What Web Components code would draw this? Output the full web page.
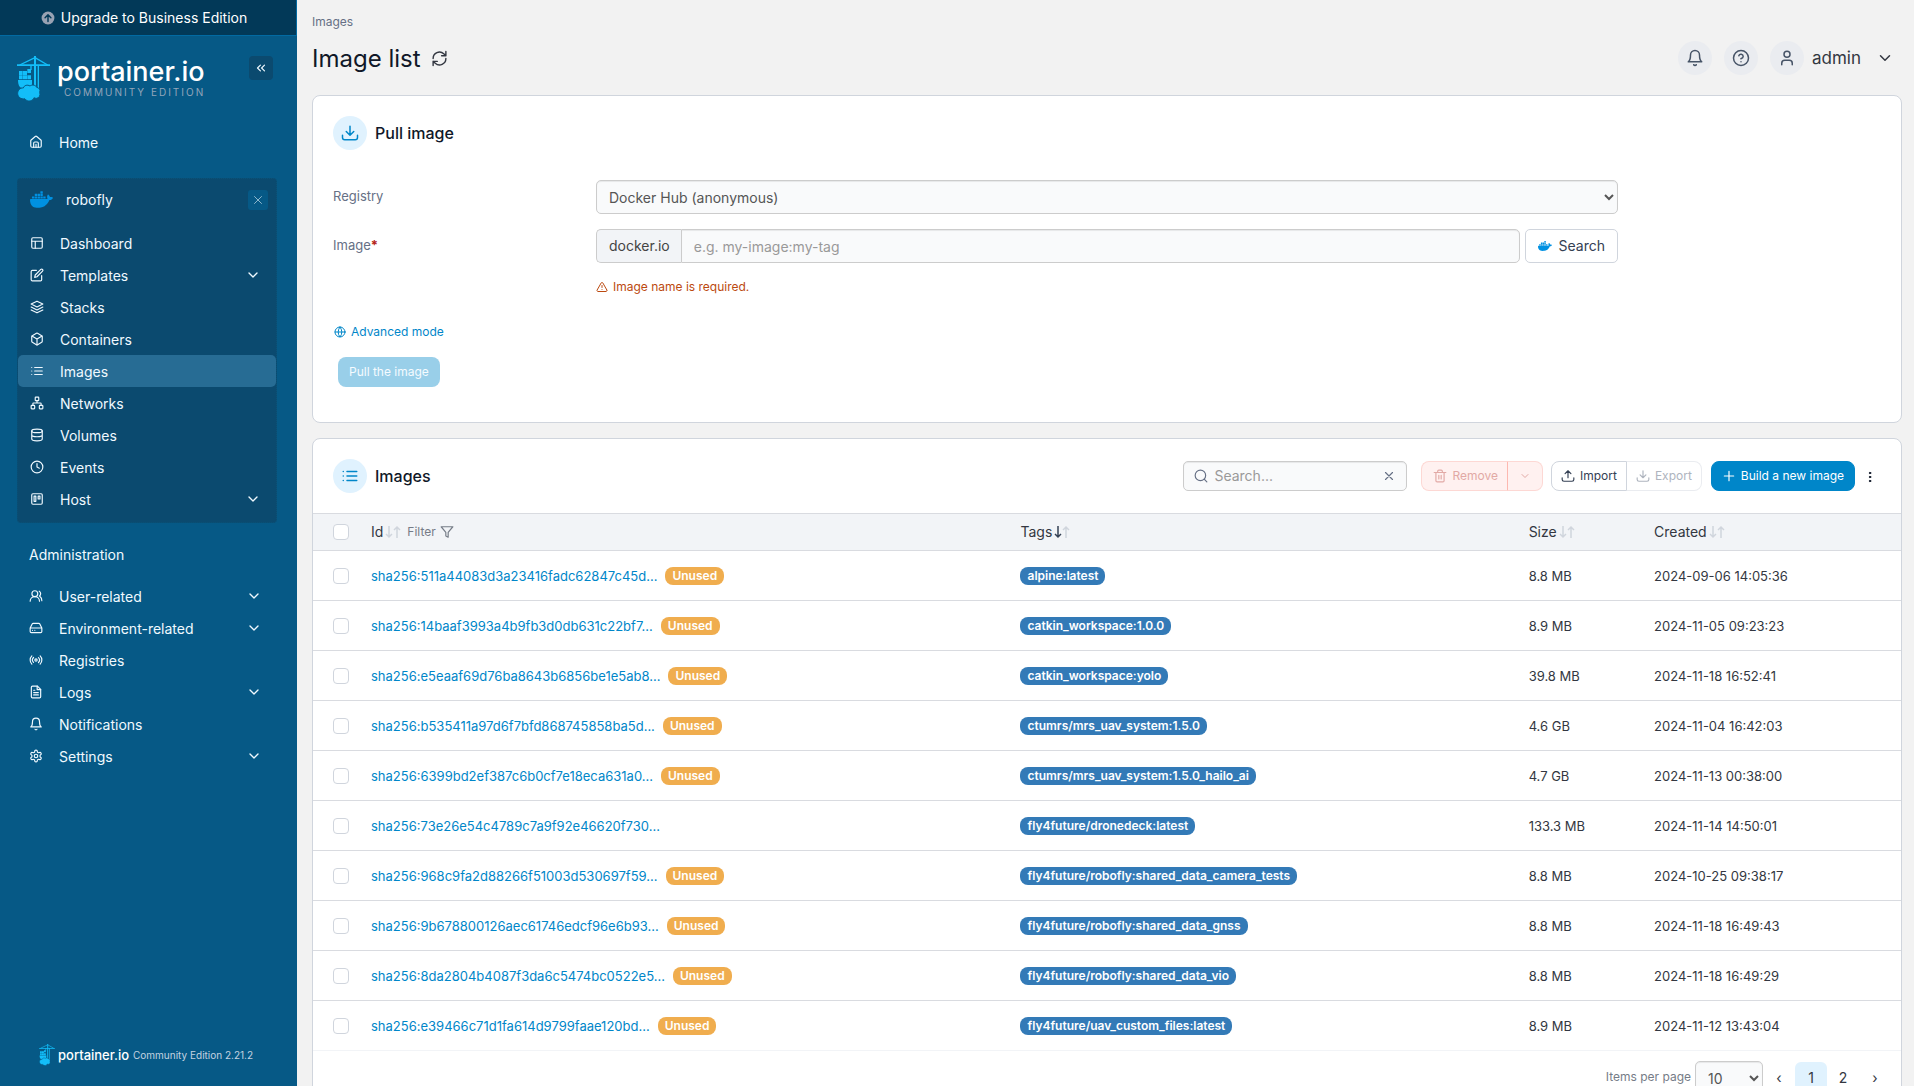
<!DOCTYPE html>
<html lang="en">
<head>
<meta charset="utf-8">
<title>Portainer</title>
<style>
  body { margin: 0; font-family: Inter, "Liberation Sans", sans-serif; font-size: 14px; line-height: 20px; color: #333741; background: #f2f2f2; }
</style>
</head>
<body>
<portainer-app>
  <app-sidebar slot="sidebar"></app-sidebar>
  <page-header page-title="Image list" crumb="Images" user="admin"></page-header>
  <pull-image-form></pull-image-form>
  <images-table></images-table>
</portainer-app>

<script>
const RESET = `:host, *, *::before, *::after { box-sizing: border-box; }
  button, input, select { font: inherit; color: inherit; margin: 0; }
  a { color: inherit; text-decoration: none; }
  h1, h2, p { margin: 0; font-weight: 500; }`;

function define(name, render) {
  customElements.define(name, class extends HTMLElement {
    connectedCallback() {
      if (this.shadowRoot) return;
      this.attachShadow({ mode: 'open' }).innerHTML = render(this);
    }
  });
}

const ICONS = {
  home: '<path d="M3 10a2 2 0 0 1 .7-1.5l7-6a2 2 0 0 1 2.6 0l7 6A2 2 0 0 1 21 10v9a2 2 0 0 1-2 2H5a2 2 0 0 1-2-2z"/><path d="M8 21v-7a2 2 0 0 1 2-2h4a2 2 0 0 1 2 2v7M12 16v5"/>',
  layout: '<rect x="3" y="3" width="18" height="18" rx="2"/><path d="M3 9h18M9 21V9"/>',
  edit: '<path d="M11 4H4a2 2 0 0 0-2 2v14a2 2 0 0 0 2 2h14a2 2 0 0 0 2-2v-7"/><path d="M18.5 2.5a2.12 2.12 0 0 1 3 3L12 15l-4 1 1-4z"/>',
  layers: '<path d="M12 2 2 7l10 5 10-5z"/><path d="m2 17 10 5 10-5M2 12l10 5 10-5"/>',
  box: '<path d="M21 8a2 2 0 0 0-1-1.73l-7-4a2 2 0 0 0-2 0l-7 4A2 2 0 0 0 3 8v8a2 2 0 0 0 1 1.73l7 4a2 2 0 0 0 2 0l7-4A2 2 0 0 0 21 16z"/><path d="m3.3 7 8.7 5 8.7-5M12 22V12"/>',
  list: '<path d="M8 6h13M8 12h13M8 18h13M3 6h.01M3 12h.01M3 18h.01"/>',
  network: '<rect x="16" y="16" width="6" height="6" rx="1"/><rect x="2" y="16" width="6" height="6" rx="1"/><rect x="9" y="2" width="6" height="6" rx="1"/><path d="M5 16v-3a1 1 0 0 1 1-1h12a1 1 0 0 1 1 1v3M12 12V8"/>',
  database: '<ellipse cx="12" cy="5" rx="9" ry="3"/><path d="M3 5v14c0 1.66 4 3 9 3s9-1.34 9-3V5M3 12c0 1.66 4 3 9 3s9-1.34 9-3"/>',
  clock: '<circle cx="12" cy="12" r="10"/><path d="M12 6v6l4 2"/>',
  trello: '<rect x="3" y="3" width="18" height="18" rx="2"/><path d="M7 7h3v9H7zM14 7h3v5h-3z"/>',
  users: '<path d="M18 21a8 8 0 0 0-16 0"/><circle cx="10" cy="8" r="5"/><path d="M22 20c0-3.37-2-6.5-4-8a5 5 0 0 0-.45-8.3"/>',
  drive: '<path d="M22 12H2M5.45 5.11 2 12v6a2 2 0 0 0 2 2h16a2 2 0 0 0 2-2v-6l-3.45-6.89A2 2 0 0 0 16.76 4H7.24a2 2 0 0 0-1.79 1.11zM6 16h.01M10 16h.01"/>',
  radio: '<circle cx="12" cy="12" r="2"/><path d="M4.9 19.1C1 15.2 1 8.8 4.9 4.9M7.8 16.2c-2.3-2.3-2.3-6.1 0-8.5M16.2 7.8c2.3 2.3 2.3 6.1 0 8.5M19.1 4.9C23 8.8 23 15.1 19.1 19"/>',
  file: '<path d="M14.5 2H6a2 2 0 0 0-2 2v16a2 2 0 0 0 2 2h12a2 2 0 0 0 2-2V7.500z"/><path d="M14 2v6h6M16 13H8M16 17H8M10 9H8"/>',
  bell: '<path d="M18 8A6 6 0 0 0 6 8c0 7-3 9-3 9h18s-3-2-3-9M10.300 21a2 2 0 0 0 3.400 0"/>',
  settings: '<path d="M12.22 2h-.44a2 2 0 0 0-2 2v.18a2 2 0 0 1-1 1.73l-.43.25a2 2 0 0 1-2 0l-.15-.08a2 2 0 0 0-2.730.73l-.22.38a2 2 0 0 0 .73 2.730l.15.1a2 2 0 0 1 1 1.720v.51a2 2 0 0 1-1 1.740l-.15.09a2 2 0 0 0-.73 2.730l.22.38a2 2 0 0 0 2.730.73l.15-.08a2 2 0 0 1 2 0l.43.25a2 2 0 0 1 1 1.730V20a2 2 0 0 0 2 2h.44a2 2 0 0 0 2-2v-.18a2 2 0 0 1 1-1.730l.43-.25a2 2 0 0 1 2 0l.15.08a2 2 0 0 0 2.730-.73l.22-.39a2 2 0 0 0-.73-2.730l-.15-.08a2 2 0 0 1-1-1.740v-.5a2 2 0 0 1 1-1.740l.15-.09a2 2 0 0 0 .73-2.730l-.22-.38a2 2 0 0 0-2.730-.73l-.15.08a2 2 0 0 1-2 0l-.43-.25a2 2 0 0 1-1-1.730V4a2 2 0 0 0-2-2z"/><circle cx="12" cy="12" r="3"/>',
  down: '<path d="m6 9 6 6 6-6"/>',
  collapse: '<path d="m11 17-5-5 5-5M18 17l-5-5 5-5"/>',
  x: '<path d="M18 6 6 18M6 6l12 12"/>',
  refresh: '<path d="M3 2v6h6M21 12A9 9 0 0 0 6 5.300L3 8M21 22v-6h-6M3 12a9 9 0 0 0 15 6.700l3-2.700" transform="matrix(-1 0 0 1 24 0)"/>',
  help: '<circle cx="12" cy="12" r="10"/><path d="M9.090 9a3 3 0 0 1 5.830 1c0 2-3 3-3 3M12 17h.01"/>',
  user: '<path d="M19 21v-2a4 4 0 0 0-4-4H9a4 4 0 0 0-4 4v2"/><circle cx="12" cy="7" r="4"/>',
  download: '<path d="M2 15v3a3 3 0 0 0 3 3h14a3 3 0 0 0 3-3v-3M7 10l5 5 5-5M12 15V3"/>',
  upload: '<path d="M2 15v3a3 3 0 0 0 3 3h14a3 3 0 0 0 3-3v-3M7 8l5-5 5 5M12 3v12"/>',
  warning: '<path d="m21.730 18-8-14a2 2 0 0 0-3.480 0l-8 14A2 2 0 0 0 4 21h16a2 2 0 0 0 1.730-3M12 9v4M12 17h.01"/>',
  globe: '<circle cx="12" cy="12" r="10"/><path d="M2 12h20M12 2a15.300 15.300 0 0 1 0 20 15.300 15.300 0 0 1 0-20"/>',
  search: '<circle cx="11" cy="11" r="9"/><path d="m22 22-4.500-4.500"/>',
  trash: '<path d="M2 6h20M19 6v14a2 2 0 0 1-2 2H7a2 2 0 0 1-2-2V6M8 6V4a2 2 0 0 1 2-2h4a2 2 0 0 1 2 2v2M10 11v6M14 11v6"/>',
  plus: '<path d="M12 4v16M4 12h16"/>',
  dots: '<circle cx="12" cy="4" r="1.500" fill="currentColor"/><circle cx="12" cy="12" r="1.500" fill="currentColor"/><circle cx="12" cy="20" r="1.500" fill="currentColor"/>',
  filter: '<path d="M22 3H2l8 9.460V19l4 2v-8.540z"/>',
  up: '<circle cx="12" cy="12" r="11" fill="currentColor" stroke="none"/><path d="M12 18V7M7 11.500 12 6.500l5 5" stroke="#023958" stroke-width="2.500"/>',
  docker: '<path fill="currentColor" stroke="none" d="M13.983 11.078h2.119a.186.186 0 00.186-.185V9.006a.186.186 0 00-.186-.186h-2.119a.185.185 0 00-.185.185v1.888c0 .102.083.185.185.185m-2.954-5.430h2.118a.186.186 0 00.186-.186V3.574a.186.186 0 00-.186-.185h-2.118a.185.185 0 00-.185.185v1.888c0 .102.082.185.185.185m0 2.716h2.118a.187.187 0 00.186-.186V6.290a.186.186 0 00-.186-.185h-2.118a.185.185 0 00-.185.185v1.887c0 .102.082.185.185.186m-2.930 0h2.120a.186.186 0 00.184-.186V6.290a.185.185 0 00-.185-.185H8.100a.185.185 0 00-.185.185v1.887c0 .102.083.185.185.186m-2.964 0h2.119a.186.186 0 00.185-.186V6.290a.185.185 0 00-.185-.185H5.136a.186.186 0 00-.186.185v1.887c0 .102.084.185.186.186m5.893 2.715h2.118a.186.186 0 00.186-.185V9.006a.186.186 0 00-.186-.186h-2.118a.185.185 0 00-.185.185v1.888c0 .102.082.185.185.185m-2.930 0h2.120a.185.185 0 00.184-.185V9.006a.185.185 0 00-.184-.186h-2.120a.185.185 0 00-.184.185v1.888c0 .102.083.185.185.185m-2.964 0h2.119a.185.185 0 00.185-.185V9.006a.185.185 0 00-.184-.186h-2.120a.186.186 0 00-.186.186v1.887c0 .102.084.185.186.185m-2.920 0h2.120a.185.185 0 00.184-.185V9.006a.185.185 0 00-.184-.186h-2.120a.185.185 0 00-.184.185v1.888c0 .102.082.185.185.185M23.763 9.890c-.065-.051-.672-.510-1.954-.510-.338.001-.676.030-1.010.087-.248-1.700-1.653-2.530-1.716-2.566l-.344-.199-.226.327c-.284.438-.490.922-.612 1.430-.230.970-.090 1.882.403 2.661-.595.332-1.550.413-1.744.420H.751a.751.751 0 00-.750.748 11.376 11.376 0 00.692 4.062c.545 1.428 1.355 2.480 2.410 3.124 1.180.723 3.100 1.137 5.275 1.137.983.003 1.963-.086 2.930-.266a12.248 12.248 0 003.823-1.389c.980-.567 1.860-1.288 2.610-2.136 1.252-1.418 1.998-2.997 2.553-4.400h.221c1.372 0 2.215-.549 2.680-1.009.309-.293.550-.650.707-1.046l.098-.288z"/>',
};

define('ui-icon', el => {
  const size = el.getAttribute('size') || 14;
  return `<style>:host { display: inline-flex; flex: none; } svg { display: block; overflow: visible; }</style>
  <svg width="${size}" height="${size}" viewBox="0 0 24 24" fill="none" stroke="currentColor" stroke-width="${el.getAttribute('stroke') || 2}" stroke-linecap="round" stroke-linejoin="round" aria-hidden="true">${ICONS[el.getAttribute('name')]}</svg>`;
});

/* Two thin arrows next to a sortable column's name */
define('sort-arrows', () => `<style>:host { display: inline-flex; color: #d0d5dd; } :host([active]) .d { color: #344054; }
  svg { display: block; margin: 0 -1px; }</style>
  <svg class="d" width="10" height="14" viewBox="0 0 10 14" fill="none" stroke="currentColor" stroke-width="1.500"><path d="M5 1v11M2 9l3 3 3-3"/></svg>
  <svg width="10" height="14" viewBox="0 0 10 14" fill="none" stroke="currentColor" stroke-width="1.500"><path d="M5 13V2M2 5l3-3 3 3"/></svg>`);

define('icon-badge', el => `<style>:host { display: flex; flex: none; width: 34px; height: 34px; border-radius: 50%; align-items: center; justify-content: center; background: #e0f2fe; color: #0086c9; }</style>
  <ui-icon name="${el.getAttribute('name')}" size="18"></ui-icon>`);

define('crane-mark', el => `<style>:host { display: block; flex: none; } svg { display: block; }</style>
  <svg width="${el.getAttribute('width')}" height="${el.getAttribute('height')}" viewBox="0 0 99 138" fill="#13bef9" aria-hidden="true">
    <path d="M51 0h6v100h-6zM0 25h99v5H0zM62 30h4v70h-4zM40 30h4v12h-4z"/>
    <path d="M54 5 8 27M54 5l38 22" fill="none" stroke="#13bef9" stroke-width="4"/>
    <path d="M31 39h11v12H31zM6 45h11v12H6zM18 45h12v12H18zM6 58h11v12H6zM18 58h12v12H18zM31 58h11v12H31z"/>
    <path d="M3 72h42v24H16C8 96 3 88 3 72z"/>
    <path stroke="#065986" stroke-width="3" d="M2 112c0-10 8-17 17-16 2-8 12-11 20-6 6-5 17-3 20 4 8 1 12 8 9 15 3 8-1 17-9 18-5 0-6-1-8-2-3 8-12 12-20 9-4-1-6-3-8-6-11 3-21-5-21-16z"/>
  </svg>`);

define('nav-item', el => `<style>${RESET}
  :host { display: block; }
  a { display: flex; align-items: center; height: 32px; padding: 0 15px 0 12px; border-radius: 5px; color: #f0f9ff; }
  :host([active]) a { background: #276c94; }
  .label { flex: 1; padding: 1px 0 0 16px; }
</style>
<a href="#"><ui-icon name="${el.getAttribute('icon')}"></ui-icon><span class="label"><slot></slot></span>${el.hasAttribute('expandable') ? '<ui-icon name="down" size="16"></ui-icon>' : ''}</a>`);

define('app-sidebar', () => `<style>${RESET}
  :host { display: flex; flex-direction: column; flex: none; width: 297px; height: 100vh; background: #065986; color: #f0f9ff; }
  .upgrade { display: flex; align-items: center; justify-content: center; gap: 6px; height: 36px; padding: 0 8px 0 0; border: 0; border-right: 1px solid #026aa2; border-bottom: 1px solid #026aa2; background: #023958; color: #fff; cursor: pointer; }
  .upgrade ui-icon { color: #98a2b3; }
  .brand { display: flex; align-items: flex-start; padding: 20px 24px 0 17px; height: 90px; }
  .words { flex: 1; padding-left: 7px; }
  .name { display: block; font-size: 27px; line-height: 32px; font-weight: 500; color: #fff; }
  .edition { display: block; padding-left: 7px; font-size: 10px; line-height: 8px; letter-spacing: 2px; color: #93a5ba; }
  .square { display: flex; align-items: center; justify-content: center; width: 24px; height: 24px; padding: 0; border: 0; border-radius: 4px; background: #0b4a6f; color: #f0f9ff; cursor: pointer; }
  .env { margin: 20px 20px 0 17px; padding-bottom: 7px; border: 1px dotted #0a5278; border-radius: 4px; background: #0b4a6f; }
  .env-head { display: flex; align-items: center; height: 48px; padding: 0 8px 7px 12px; }
  .env-head .docker { color: #0091e2; }
  .env-head span { flex: 1; padding-left: 13px; }
  .env-head .square { width: 20px; height: 20px; border-radius: 3px; background: #065986; }
  .plain { margin: 0 20px 0 17px; }
  .section { padding: 22px 29px 15px; line-height: 20px; }
  footer { display: flex; align-items: center; margin-top: auto; padding: 0 0 20px 39px; font-size: 10px; color: #c3d3e0; }
  footer b { padding: 0 4px 0 3px; font-size: 13px; font-weight: 500; color: #fff; }
</style>
<button class="upgrade" type="button"><ui-icon name="up"></ui-icon>Upgrade to Business Edition</button>
<div class="brand"><crane-mark width="33" height="46"></crane-mark>
  <div class="words"><span class="name">portainer.io</span><span class="edition">COMMUNITY EDITION</span></div>
  <button class="square" type="button" aria-label="Collapse sidebar"><ui-icon name="collapse"></ui-icon></button></div>
<nav class="plain" aria-label="Main"><nav-item icon="home">Home</nav-item></nav>
<nav class="env" aria-label="Environment">
  <div class="env-head"><ui-icon class="docker" name="docker" size="23"></ui-icon><span>robofly</span><button class="square" type="button" aria-label="Close environment"><ui-icon name="x" size="14" stroke="1"></ui-icon></button></div>
  <nav-item icon="layout">Dashboard</nav-item>
  <nav-item icon="edit" expandable>Templates</nav-item>
  <nav-item icon="layers">Stacks</nav-item>
  <nav-item icon="box">Containers</nav-item>
  <nav-item icon="list" active>Images</nav-item>
  <nav-item icon="network">Networks</nav-item>
  <nav-item icon="database">Volumes</nav-item>
  <nav-item icon="clock">Events</nav-item>
  <nav-item icon="trello" expandable>Host</nav-item>
</nav>
<div class="section">Administration</div>
<nav class="plain" aria-label="Administration">
  <nav-item icon="users" expandable>User-related</nav-item>
  <nav-item icon="drive" expandable>Environment-related</nav-item>
  <nav-item icon="radio">Registries</nav-item>
  <nav-item icon="file" expandable>Logs</nav-item>
  <nav-item icon="bell">Notifications</nav-item>
  <nav-item icon="settings" expandable>Settings</nav-item>
</nav>
<footer><crane-mark width="16" height="22"></crane-mark><b>portainer.io</b><span>Community Edition 2.21.2</span></footer>`);

define('portainer-app', () => `<style>${RESET}
  :host { display: flex; height: 100vh; }
  main { flex: 1; min-width: 0; padding: 0 12px 20px 15px; display: flex; flex-direction: column; gap: 15px; overflow-y: auto; scrollbar-width: none; }
</style><slot name="sidebar"></slot><main><slot></slot></main>`);

define('page-header', el => `<style>${RESET}
  :host { display: block; height: 80px; flex: none; padding-top: 12px; }
  .crumb { display: block; font-size: 12px; line-height: 20px; color: #667085; }
  .row { display: flex; align-items: center; height: 34px; margin-top: 9px; }
  h1 { padding-top: 2px; font-size: 24px; line-height: 32px; font-weight: 400; color: #101828; }
  .plain { display: flex; align-items: center; padding: 0; border: 0; background: none; cursor: pointer; }
  .refresh { margin: 0 auto 0 10px; }
  .actions { display: flex; align-items: center; gap: 12px; padding-right: 8px; }
  .round { display: flex; align-items: center; justify-content: center; width: 34px; height: 34px; padding: 0; border: 0; border-radius: 50%; background: #eaecf0; color: #475467; }
  .user { font-size: 17px; gap: 8px; }
  .user span.name { padding-right: 7px; }
</style>
<a class="crumb" href="#">${el.getAttribute('crumb')}</a>
<div class="row"><h1>${el.getAttribute('page-title')}</h1>
<button class="plain refresh" type="button" aria-label="Refresh"><ui-icon name="refresh" size="17"></ui-icon></button>
<div class="actions"><button class="round" type="button" aria-label="Notifications"><ui-icon name="bell" size="18"></ui-icon></button>
<button class="round" type="button" aria-label="Help"><ui-icon name="help" size="18"></ui-icon></button>
<button class="plain user" type="button"><span class="round"><ui-icon name="user" size="18"></ui-icon></span><span class="name">${el.getAttribute('user')}</span><ui-icon name="down" size="18"></ui-icon></button></div></div>`);

const CARD = `:host { display: block; flex: none; border: 1px solid #d0d5dd; border-radius: 8px; background: #fff; }
  .head { display: flex; align-items: center; gap: 8px; padding: 20px; }
  h2 { font-size: 16px; line-height: 24px; color: #101828; }
  .field { border: 1px solid #ccc; border-radius: 5px; background: #f9fafb; box-shadow: inset 0 1px 1px rgba(0,0,0,.075); color: #555; outline: 0; }
  input::placeholder { color: #999; opacity: 1; }`;

define('pull-image-form', () => `<style>${RESET}${CARD}
  form { padding: 10px 20px 35px; }
  .line { display: grid; grid-template-columns: 263px minmax(0, 1022px); margin-bottom: 15px; }
  label { padding-top: 6px; font-size: 13px; color: #667085; }
  label i { font-style: normal; font-weight: 700; color: #b42318; }
  select.field { width: 100%; height: 34px; padding: 0 8px; }
  .group { display: flex; }
  .addon { display: flex; align-items: center; height: 34px; padding: 0 11px 0 12px; border: 1px solid #ccc; border-right: 0; border-radius: 5px 0 0 5px; background: #f2f4f7; color: #444; }
  .group .field { flex: 1; min-width: 0; height: 34px; padding: 0 12px; border-radius: 0 5px 5px 0; }
  .search { display: flex; align-items: center; gap: 7px; margin-left: 5px; padding: 0 12px; border: 1px solid #d0d5dd; border-radius: 5px; background: #fff; color: #344054; }
  .search ui-icon { color: #0091e2; }
  .warn { display: flex; align-items: center; gap: 5px; margin-top: 14px; font-size: 12px; font-weight: 400; color: #bc4a10; }
  .mode { display: flex; align-items: center; gap: 5px; margin-top: 25px; font-size: 12px; color: #0086c9; padding: 0 1px; border: 0; background: none; }
  .pull { height: 30px; margin: 15px 5px 0; padding: 0 11px; border: 0; border-radius: 8px; background: #99cfe9; color: #f5fbff; font-size: 12px; }
</style>
<div class="head"><icon-badge name="download"></icon-badge><h2>Pull image</h2></div>
<form>
  <div class="line"><label for="registry">Registry</label><select class="field" id="registry"><option>Docker Hub (anonymous)</option></select></div>
  <div class="line"><label for="image">Image<i>*</i></label>
    <div><div class="group"><span class="addon">docker.io</span><input class="field" id="image" type="text" placeholder="e.g. my-image:my-tag"><button class="search" type="button"><ui-icon name="docker"></ui-icon>Search</button></div>
    <p class="warn"><ui-icon name="warning" size="12"></ui-icon>Image name is required.</p></div></div>
  <button class="mode" type="button"><ui-icon name="globe" size="12"></ui-icon>Advanced mode</button>
  <button class="pull" type="button" disabled>Pull the image</button>
</form>`);

define('ui-pill', () => `<style>:host { display: block; height: 18px; padding: 0 7px; border-radius: 8px; background: #337ab7; color: #fff; font-size: 12px; line-height: 18px; font-weight: 600; }
  :host([kind="unused"]) { background: #f0ad4e; }</style><slot></slot>`);

const IMAGES = [
  ['511a44083d3a23416fadc62847c45d', 1, 'alpine:latest', '8.8 MB', '2024-09-06 14:05:36'],
  ['14baaf3993a4b9fb3d0db631c22bf7', 1, 'catkin_workspace:1.0.0', '8.9 MB', '2024-11-05 09:23:23'],
  ['e5eaaf69d76ba8643b6856be1e5ab8', 1, 'catkin_workspace:yolo', '39.8 MB', '2024-11-18 16:52:41'],
  ['b535411a97d6f7bfd868745858ba5d', 1, 'ctumrs/mrs_uav_system:1.5.0', '4.6 GB', '2024-11-04 16:42:03'],
  ['6399bd2ef387c6b0cf7e18eca631a0', 1, 'ctumrs/mrs_uav_system:1.5.0_hailo_ai', '4.7 GB', '2024-11-13 00:38:00'],
  ['73e26e54c4789c7a9f92e46620f730', 0, 'fly4future/dronedeck:latest', '133.3 MB', '2024-11-14 14:50:01'],
  ['968c9fa2d88266f51003d530697f59', 1, 'fly4future/robofly:shared_data_camera_tests', '8.8 MB', '2024-10-25 09:38:17'],
  ['9b678800126aec61746edcf96e6b93', 1, 'fly4future/robofly:shared_data_gnss', '8.8 MB', '2024-11-18 16:49:43'],
  ['8da2804b4087f3da6c5474bc0522e5', 1, 'fly4future/robofly:shared_data_vio', '8.8 MB', '2024-11-18 16:49:29'],
  ['e39466c71d1fa614d9799faae120bd', 1, 'fly4future/uav_custom_files:latest', '8.9 MB', '2024-11-12 13:43:04'],
];

define('images-table', () => `<style>${RESET}${CARD}
  .head h2 { flex: 1; }
  .tools { display: flex; align-items: center; font-size: 12px; }
  .tools button { display: flex; align-items: center; gap: 5px; height: 30px; padding: 0 9px; border: 1px solid #d0d5dd; background: #fff; }
  .find { display: flex; align-items: center; gap: 6px; width: 224px; height: 30px; padding: 0 10px; font-size: 14px; }
  .find ui-icon { color: #667085; }
  .find input { flex: 1; min-width: 0; padding: 0; border: 0; outline: 0; background: none; }
  .tools .find button { height: 20px; padding: 0; border: 0; background: none; }
  .split { display: flex; margin-left: 14px; }
  .split button { border-radius: 8px; }
  .split button:first-child { border-radius: 8px 0 0 8px; }
  .split button:last-child { border-radius: 0 8px 8px 0; border-left: 0; }
  .tools .danger button { border-color: #fdd8d4; background: #fff1f0; color: #e2a9a5; padding: 0 11px; }
  .tools .danger button:first-child { border-right-color: #fdb8b0; padding: 0 9px 0 11px; }
  .files { margin-left: 8px; }
  .tools .files button { color: #344054; }
  .tools .files button:last-child { border-color: #eaecf0; color: #aeb4be; }
  .tools .build { margin-left: 9px; padding: 0 10px; border-color: #0086c9; border-radius: 8px; background: #0086c9; color: #fff; }
  .tools .more { padding: 0; margin: 2px 5px 0 9px; border: 0; background: none; color: #101828; }
  table { width: 100%; table-layout: fixed; border-collapse: collapse; }
  col.c0 { width: 58px; } col.c1 { width: 40.9%; } col.c2 { width: 32%; } col.c3 { width: 7.9%; }
  th { height: 37px; padding: 0; border: solid #d9dbe0; border-width: 1px 0; background: #f2f4f7; text-align: left; font-weight: 400; color: #333741; }
  th > div, td > div { display: flex; align-items: center; gap: 2px; }
  td > div { gap: 8px; }
  .filter { display: flex; align-items: center; gap: 4px; padding: 0; margin-left: 4px; border: 0; background: none; font-size: 12px; color: #767c87; }
  td { height: 50px; padding: 0; border-bottom: 1px solid #d9dbe0; font-size: 13px; }
  tr:last-child td { border-bottom-color: #f2f4f7; }
  td a { color: #0086c9; }
  input[type="checkbox"] { appearance: none; display: block; width: 16px; height: 16px; margin: 0 0 0 20px; border: 1px solid #d0d5dd; border-radius: 4px; background: #fff; }
  .foot { display: flex; align-items: center; justify-content: flex-end; padding: 10px 10px 12px; }
  .foot label { padding: 0 4px 2px 0; font-size: 12px; color: #767c87; }
  .foot select { width: 68px; height: 34px; padding: 0 8px; }
  .foot button { min-width: 32px; height: 32px; padding: 0 8px; border: 0; border-radius: 6px; background: none; color: #333741; }
  .foot .cur { background: #e0f2fe; }
</style>
<div class="head"><icon-badge name="list"></icon-badge><h2>Images</h2>
  <div class="tools">
    <div class="field find"><ui-icon name="search"></ui-icon><input type="text" placeholder="Search..." aria-label="Search images"><button type="button" aria-label="Clear search"><ui-icon name="x" stroke="2"></ui-icon></button></div>
    <div class="split danger"><button type="button" disabled><ui-icon name="trash"></ui-icon>Remove</button><button type="button" disabled aria-label="Remove options"><ui-icon name="down" size="12"></ui-icon></button></div>
    <div class="split files"><button type="button"><ui-icon name="upload"></ui-icon>Import</button><button type="button" disabled><ui-icon name="download"></ui-icon>Export</button></div>
    <button class="build" type="button"><ui-icon name="plus"></ui-icon>Build a new image</button>
    <button class="more" type="button" aria-label="Table settings"><ui-icon name="dots" size="12"></ui-icon></button>
  </div></div>
<table><colgroup><col class="c0"><col class="c1"><col class="c2"><col class="c3"><col></colgroup>
<thead><tr><th><input type="checkbox" aria-label="Select all"></th>
<th><div>Id<sort-arrows></sort-arrows><button class="filter" type="button">Filter<ui-icon name="filter"></ui-icon></button></div></th>
<th><div>Tags<sort-arrows active></sort-arrows></div></th><th><div>Size<sort-arrows></sort-arrows></div></th><th><div>Created<sort-arrows></sort-arrows></div></th></tr></thead>
<tbody>${IMAGES.map(([id, unused, tag, size, date]) => `<tr><td><input type="checkbox" aria-label="Select ${tag}"></td><td><div><a href="#">sha256:${id}...</a>${unused ? '<ui-pill kind="unused">Unused</ui-pill>' : ''}</div></td><td><div><ui-pill>${tag}</ui-pill></div></td><td>${size}</td><td>${date}</td></tr>`).join('')}</tbody></table>
<div class="foot"><label for="per">Items per page</label><select class="field" id="per"><option>10</option></select>
<button type="button" aria-label="Previous page">‹</button><button class="cur" type="button">1</button><button type="button">2</button><button type="button" aria-label="Next page">›</button></div>`);
</script>
</body>
</html>
